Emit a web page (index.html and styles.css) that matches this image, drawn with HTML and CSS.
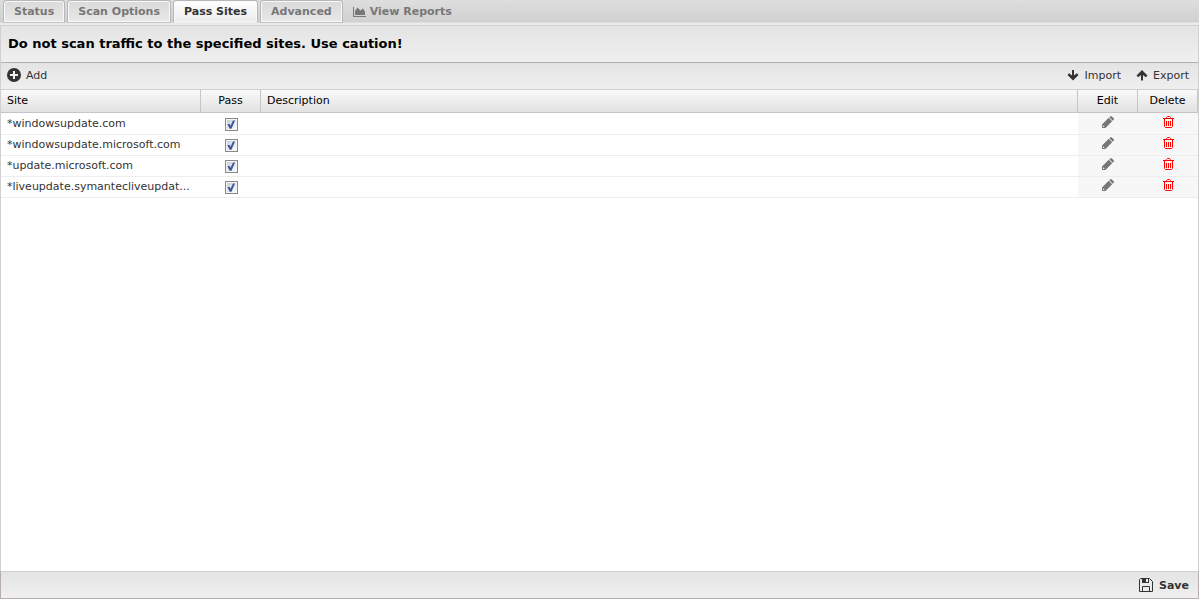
FILE: index.html
```html
<!DOCTYPE html>
<html lang="en">
<head>
    <meta charset="UTF-8">
    <meta name="viewport" content="width=device-width, initial-scale=1.0">
    <title>Pass Sites</title>
    <link rel="stylesheet" href="styles.css">
</head>
<body>

    <svg class="sprite" aria-hidden="true">
        <symbol id="icon-pencil" viewBox="0 0 12 12">
            <path d="M0 12V8.500L6.700 1.800l3.500 3.500L3.500 12zM7.300 1.200L8.200.4q.8-.7 1.600 0l1.900 1.900q.6.800 0 1.500l-.9.900z"/>
            <path d="M1 9.300l1.700 1.700H1z" fill="#f7f7f7"/>
        </symbol>
        <symbol id="icon-trash" viewBox="0 0 11 12">
            <path d="M0 2.500h11M3.500 2.500v-1l1-1h2l1 1v1M1.500 2.500v8l1 1h6l1-1v-8M3.500 5v5M5.500 5v5M7.500 5v5"/>
        </symbol>
    </svg>

    <nav class="tabs">
        <button class="tab">Status</button>
        <button class="tab">Scan Options</button>
        <button class="tab active">Pass Sites</button>
        <button class="tab">Advanced</button>
        <a class="reports" href="#">
            <svg class="icon-chart" viewBox="0 0 13 10"><path d="M0 0h1v9h12v1H0zM2 8V4L4.500.5 7.500 3.500 10 1.500l2 3V8z"/></svg>
            View Reports
        </a>
    </nav>

    <main class="panel">
        <h1 class="title">Do not scan traffic to the specified sites. Use caution!</h1>

        <div class="toolbar">
            <button class="tool">
                <svg class="icon-add" viewBox="0 0 14 14"><circle cx="7" cy="7" r="7"/><path d="M6 3h2v3h3v2H8v3H6V8H3V6h3z"/></svg>
                Add
            </button>
            <div class="tool-group">
                <button class="tool">
                    <svg class="icon-arrow" viewBox="0 0 12 12"><path d="M5 1h2v5.500l2.800-2.300L11.500 6 6 11.500.5 6l1.700-1.800L5 6.500z"/></svg>
                    Import
                </button>
                <button class="tool">
                    <svg class="icon-arrow" viewBox="0 0 12 12"><path d="M5 11.500h2V6l2.800 2.300 1.700-1.800L6 1 .5 6.500l1.700 1.800L5 6z"/></svg>
                    Export
                </button>
            </div>
        </div>

        <div class="grid">
            <table>
                <thead>
                    <tr>
                        <th class="col-site">Site</th>
                        <th class="col-small">Pass</th>
                        <th>Description</th>
                        <th class="col-small">Edit</th>
                        <th class="col-small">Delete</th>
                    </tr>
                </thead>
                <tbody>
                    <tr>
                        <td>*windowsupdate.com</td>
                        <td class="check"><input type="checkbox" aria-label="Pass" checked></td>
                        <td></td>
                        <td class="action"><button aria-label="Edit"><svg class="icon-pencil"><use href="#icon-pencil"/></svg></button></td>
                        <td class="action"><button aria-label="Delete"><svg class="icon-trash"><use href="#icon-trash"/></svg></button></td>
                    </tr>
                    <tr>
                        <td>*windowsupdate.microsoft.com</td>
                        <td class="check"><input type="checkbox" aria-label="Pass" checked></td>
                        <td></td>
                        <td class="action"><button aria-label="Edit"><svg class="icon-pencil"><use href="#icon-pencil"/></svg></button></td>
                        <td class="action"><button aria-label="Delete"><svg class="icon-trash"><use href="#icon-trash"/></svg></button></td>
                    </tr>
                    <tr>
                        <td>*update.microsoft.com</td>
                        <td class="check"><input type="checkbox" aria-label="Pass" checked></td>
                        <td></td>
                        <td class="action"><button aria-label="Edit"><svg class="icon-pencil"><use href="#icon-pencil"/></svg></button></td>
                        <td class="action"><button aria-label="Delete"><svg class="icon-trash"><use href="#icon-trash"/></svg></button></td>
                    </tr>
                    <tr>
                        <td>*liveupdate.symantecliveupdat...</td>
                        <td class="check"><input type="checkbox" aria-label="Pass" checked></td>
                        <td></td>
                        <td class="action"><button aria-label="Edit"><svg class="icon-pencil"><use href="#icon-pencil"/></svg></button></td>
                        <td class="action"><button aria-label="Delete"><svg class="icon-trash"><use href="#icon-trash"/></svg></button></td>
                    </tr>
                </tbody>
            </table>
        </div>
    </main>

    <footer class="footer">
        <button class="save">
            <svg class="icon-save" viewBox="0 0 14 14"><path class="line" d="M1.500.5h9l3 3v10H.5V1.500zM3.500 13.500v-5h7v5"/><path d="M3 1h7v4H3z"/><path class="hole" d="M7 1h2v3H7z"/></svg>
            Save
        </button>
    </footer>

</body>
</html>
```
FILE: styles.css
```css
* {
    box-sizing: border-box;
}

body {
    margin: 0;
    height: 100vh;
    display: flex;
    flex-direction: column;
    font-family: "DejaVu Sans", Verdana, sans-serif;
    font-size: 11px;
    color: #333;
    background: #fff;
}

button {
    font: inherit;
    color: inherit;
    background: none;
    border: 0;
    padding: 0;
    cursor: pointer;
}

svg {
    fill: #333;
    flex: none;
}

.sprite {
    display: none;
}

/* tabs */
.tabs {
    display: flex;
    align-items: flex-end;
    gap: 2px;
    height: 26px;
    padding: 0 3px 2px;
    border-bottom: 1px solid #d0d0d0;
    background: linear-gradient(#dedede, #d0d0d0 22px, #ebebeb 23px);
    font-weight: bold;
    color: #777;
}

.tab {
    height: 23px;
    padding: 0 10px;
    border: 1px solid #b8b8b8;
    border-bottom-color: #c4c4c4;
    border-radius: 3px 3px 0 0;
    background: linear-gradient(#dadada, #e8e8e8);
    box-shadow: inset 0 0 0 1px #f8f8f8;
}

.tab.active {
    border-bottom-color: #ebebeb;
    background: linear-gradient(#fff, #ebebeb);
    color: #333;
}

.reports {
    display: flex;
    align-items: center;
    gap: 4px;
    height: 23px;
    padding: 0 8px;
    color: #777;
    text-decoration: none;
}

.icon-chart {
    width: 13px;
    height: 10px;
    fill: #777;
}

/* panel */
.panel {
    flex: 1;
    display: flex;
    flex-direction: column;
    border: solid #d0d0d0;
    border-width: 0 1px;
}

.title {
    margin: 0;
    padding: 0 7px;
    border-bottom: 1px solid #b8adad;
    background: linear-gradient(#e4e4e4, #efefef);
    font-size: 13px;
    line-height: 36px;
    color: #000;
}

.toolbar {
    display: flex;
    justify-content: space-between;
    height: 27px;
    padding: 0 9px 2px 6px;
    border-bottom: 1px solid #d0d0d0;
    background: linear-gradient(#e4e4e4, #efefef);
}

.tool-group {
    display: flex;
    gap: 15px;
}

.tool {
    display: flex;
    align-items: center;
    gap: 5px;
}

.icon-add {
    width: 14px;
    height: 14px;
}

.icon-add path {
    fill: #efefef;
}

.icon-arrow {
    width: 12px;
    height: 12px;
}

/* grid */
.grid {
    flex: 1;
}

table {
    width: 100%;
    table-layout: fixed;
    border-spacing: 0;
}

th {
    height: 23px;
    padding: 0 6px 2px;
    border: solid #c5c5c5;
    border-width: 0 1px 1px 0;
    background: linear-gradient(#f9f9f9, #e3e2e2);
    font-weight: normal;
    text-align: left;
    color: #000;
}

.col-site {
    width: 200px;
}

.col-small {
    width: 60px;
    text-align: center;
}

td {
    height: 21px;
    padding: 0 6px 2px;
    border-bottom: 1px solid #ededed;
    white-space: nowrap;
}

tbody tr:first-child td {
    height: 22px;
    border-top: 1px solid transparent;
}

.check,
.action {
    padding: 2px 0 0;
    vertical-align: top;
}

.action {
    background: #f7f7f7;
}

.action button,
.action svg {
    display: block;
    margin: 0 auto;
}

input[type="checkbox"] {
    appearance: none;
    display: grid;
    place-items: center;
    width: 13px;
    height: 13px;
    margin: 2px auto 0;
    border: 1px solid #888;
    background: linear-gradient(135deg, #c4cad6, #fff);
    box-shadow: inset 0 0 0 1px #f4f4f4;
}

input[type="checkbox"]:checked::before {
    content: "";
    width: 9px;
    height: 9px;
    background: #3d569c;
    clip-path: polygon(10% 45%, 35% 45%, 45% 65%, 72% 5%, 95% 5%, 55% 98%, 35% 98%);
}

.icon-pencil {
    width: 12px;
    height: 12px;
    fill: #777;
}

.icon-trash {
    width: 11px;
    height: 12px;
    fill: none;
    stroke: #f00;
}

/* footer */
.footer {
    display: flex;
    justify-content: flex-end;
    height: 28px;
    padding: 0 9px;
    border: 1px solid #b8adad;
    border-top-color: #d0d0d0;
    background: linear-gradient(#e4e4e4, #efefef);
}

.save {
    display: flex;
    align-items: center;
    gap: 6px;
    font-weight: bold;
}

.icon-save {
    width: 14px;
    height: 14px;
}

.icon-save .line {
    fill: none;
    stroke: #333;
}

.icon-save .hole {
    fill: #efefef;
}
```
